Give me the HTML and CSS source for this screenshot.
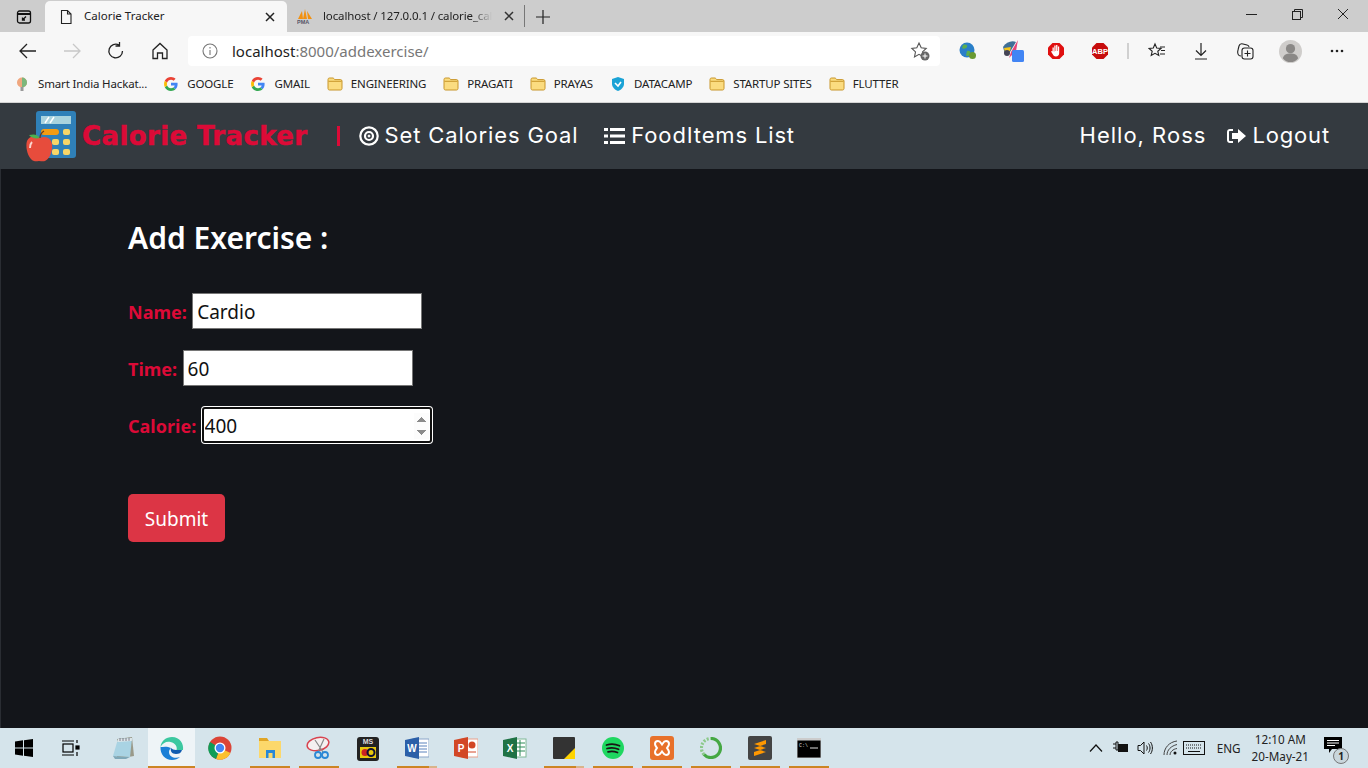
FILE: index.html
```html
<!DOCTYPE html>
<html lang="en">
<head>
    <meta charset="UTF-8">
    <meta name="viewport" content="width=device-width, initial-scale=1.0">
    <title>Calorie Tracker</title>
    <link rel="stylesheet" href="styles.css">
</head>
<body>

    <svg class="defs" width="0" height="0">
        <symbol id="folder" viewBox="0 0 16 16">
            <path d="M1 3.500C1 2.700 1.600 2 2.400 2h3.800l1.600 1.600h5.800c.8 0 1.400.6 1.400 1.400v7.500c0 .8-.6 1.500-1.400 1.500H2.400C1.600 14 1 13.300 1 12.500z" fill="#fbdc80" stroke="#c8962a"/>
            <path d="M1.500 5.300h13" stroke="#c8962a"/>
        </symbol>
        <symbol id="google" viewBox="0 0 16 16">
            <path d="M14.600 8.200c0-.5 0-1-.1-1.400H8v2.700h3.700c-.2.900-.7 1.600-1.400 2.100l2.200 1.700c1.300-1.200 2.100-3 2.100-5.100z" fill="#4285f4"/>
            <path d="M8 15c1.900 0 3.400-.6 4.500-1.700l-2.200-1.700c-.6.400-1.400.7-2.300.7-1.800 0-3.300-1.200-3.900-2.800L1.800 11.200C2.900 13.500 5.300 15 8 15z" fill="#34a853"/>
            <path d="M4.100 9.500c-.3-1-.3-2 0-3L1.800 4.800c-1 1.900-1 4.500 0 6.400z" fill="#fbbc05"/>
            <path d="M8 3.800c1 0 1.900.3 2.600 1l2-2C11.400 1.700 9.800 1 8 1 5.300 1 2.900 2.500 1.800 4.800l2.300 1.700C4.700 5 6.200 3.800 8 3.800z" fill="#ea4335"/>
        </symbol>
    </svg>

    <div class="window">

        <div class="tabstrip">
            <div class="tab-menu">
                <svg width="16" height="16" viewBox="0 0 16 16" fill="none" stroke="#111" stroke-width="1.300"><rect x="1.500" y="2" width="13" height="12" rx="2"/><path d="M1.500 5h13" stroke-width="2"/><path d="M10 7.500 6.500 11M6.500 8.500V11H9"/></svg>
            </div>
            <div class="tab tab-active">
                <svg width="16" height="16" viewBox="0 0 16 16" fill="none" stroke="#222" stroke-width="1.100"><path d="M3.500 1.500h6l3.500 3.500v9.500h-9.500zM9.500 1.500V5H13"/></svg>
                <span class="tab-title">Calorie Tracker</span>
                <svg class="tab-x" width="10" height="10" viewBox="0 0 10 10" stroke="#222" stroke-width="1.500"><path d="M1 1l8 8M9 1l-8 8"/></svg>
            </div>
            <div class="tab">
                <svg class="tab-icon" width="16" height="16" viewBox="0 0 16 16"><path d="M1 11 5 3l1 8zM6 11 8 1l2 10zM11 11l-1-8 5 8z" fill="#f29111"/><text x="0" y="16" font-size="5.500" font-weight="700" font-family="Liberation Sans" fill="#556">PMA</text></svg>
                <span class="tab-title tab-fade">localhost / 127.0.0.1 / calorie_cal</span>
                <svg class="tab-x" width="10" height="10" viewBox="0 0 10 10" stroke="#333" stroke-width="1.500"><path d="M1 1l8 8M9 1l-8 8"/></svg>
            </div>
            <div class="tab-new">
                <svg width="14" height="14" viewBox="0 0 14 14" stroke="#222" stroke-width="1.200"><path d="M7 0v14M0 7h14"/></svg>
            </div>
            <div class="win-controls">
                <div class="win-btn"><svg width="11" height="11" viewBox="0 0 11 11" stroke="#222"><path d="M0 5.500h11"/></svg></div>
                <div class="win-btn"><svg width="11" height="11" viewBox="0 0 11 11" fill="none" stroke="#222"><rect x=".5" y="2.500" width="8" height="8"/><path d="M2.500 2.500v-2h8v8h-2"/></svg></div>
                <div class="win-btn"><svg width="12" height="12" viewBox="0 0 12 12" stroke="#222"><path d="M1 1l10 10M11 1 1 11"/></svg></div>
            </div>
        </div>

        <div class="toolbar">
            <div class="tool"><svg width="18" height="16" viewBox="0 0 18 16" fill="none" stroke="#222" stroke-width="1.300"><path d="M17 8H1M8 1 1 8l7 7"/></svg></div>
            <div class="tool"><svg width="18" height="16" viewBox="0 0 18 16" fill="none" stroke="#c8c8c8" stroke-width="1.300"><path d="M1 8h16M10 1l7 7-7 7"/></svg></div>
            <div class="tool"><svg width="18" height="18" viewBox="0 0 18 18" fill="none" stroke="#222" stroke-width="1.300"><path d="M15.500 9A6.800 6.800 0 1 1 12 3.100M12.500 0v4h-4"/></svg></div>
            <div class="tool"><svg width="18" height="18" viewBox="0 0 18 18" fill="none" stroke="#222" stroke-width="1.300"><path d="M2 8 9 1.500 16 8v8.500h-4.500V11h-5v5.500H2z"/></svg></div>
            <div class="address">
                <svg width="16" height="16" viewBox="0 0 16 16" fill="none" stroke="#777" stroke-width="1.100"><circle cx="8" cy="8" r="7"/><path d="M8 7v5M8 4v1.500"/></svg>
                <span class="url">localhost<span class="url-dim">:8000/addexercise/</span></span>
                <svg class="addr-star" width="20" height="20" viewBox="0 0 20 20"><path d="M9 2l2.200 4.800 5 .6-3.700 3.500 1 5-4.500-2.600-4.500 2.600 1-5L1.800 7.400l5-.6z" fill="none" stroke="#555" stroke-width="1.100"/><circle cx="15" cy="15" r="4.500" fill="#666"/><path d="M15 12.500v5M12.500 15h5" stroke="#fff"/></svg>
            </div>
            <div class="tool tool-first"><svg width="18" height="18" viewBox="0 0 18 18"><circle cx="8" cy="8" r="7.500" fill="#2a7fc9"/><path d="M4 3c3-1 5 0 4 2S4 7 3 6zM8 9c3-1 4 1 3 3s-3 3-4 1z" fill="#5cae4f"/><circle cx="13.500" cy="13.500" r="3.500" fill="#6a9a32"/></svg></div>
            <div class="tool tool-shift">
                <svg width="24" height="24" viewBox="0 0 24 24"><path d="M1 8c3-5 9-7 13-5L8 13 3 15z" fill="#3f6f97"/><path d="M2 9l7-1-1 4-5 1z" fill="#f5c518"/><circle cx="5" cy="14" r="3" fill="#445"/><path d="M16 1 9 13l-2 6 7-7z" fill="#e8457a"/><rect x="10" y="11" width="12" height="12" rx="1.500" fill="#4285f4"/></svg>
            </div>
            <div class="tool"><svg width="18" height="18" viewBox="0 0 18 18"><path d="M5.500 1h7L17 5.500v7L12.500 17h-7L1 12.500v-7z" fill="#e01010"/><path d="M5.500 5.500h1.300v4h.5V3.500h1.300v5.500h.5V3h1.300v6h.5V4.500h1.300V11c0 2-1.200 3.500-3.300 3.500-1.600 0-2.400-.7-3-2L4 9.500l1-.6 1 1.300h-.5z" fill="#fff"/></svg></div>
            <div class="tool"><svg width="18" height="18" viewBox="0 0 18 18"><path d="M5.500 1h7L17 5.500v7L12.500 17h-7L1 12.500v-7z" fill="#c70d0d"/><text x="9" y="11.700" text-anchor="middle" font-size="7.500" font-weight="700" font-family="Liberation Sans" fill="#fff">ABP</text></svg></div>
            <div class="tool-sep"></div>
            <div class="tool"><svg width="18" height="18" viewBox="0 0 18 18" fill="none" stroke="#222" stroke-width="1.100"><path d="M7 2l1.700 4 4.300.4-3.200 2.900 1 4.200L7 11.300 3.200 13.500l1-4.200L1 6.400 5.300 6zM12 5h5M13 8.500h4M12 12h5"/></svg></div>
            <div class="tool"><svg width="18" height="18" viewBox="0 0 18 18" fill="none" stroke="#222" stroke-width="1.200"><path d="M9 1v12M4 8.500 9 13.500l5-5M3 17h12"/></svg></div>
            <div class="tool"><svg width="18" height="18" viewBox="0 0 18 18" fill="none" stroke="#222" stroke-width="1.100"><path d="M5 14C2 14 1 11 2 8l1-4c.5-2 2-2.500 4-2l4 1c1 .3 2 1 2 2"/><rect x="6" y="6" width="11" height="11" rx="2.500" fill="#f7f7f7"/><path d="M11.500 8.500v6M8.500 11.500h6"/></svg></div>
            <div class="tool tool-shift">
                <svg width="23" height="23" viewBox="0 0 24 24"><circle cx="12" cy="12" r="12" fill="#cfcdcb"/><circle cx="12" cy="9" r="4.800" fill="#8a8886"/><path d="M4 19c1-4 4-5 8-5s7 1 8 5c-2 3-5 4-8 4s-6-1-8-4z" fill="#8a8886"/></svg>
            </div>
            <div class="tool tool-last"><svg width="14" height="4" viewBox="0 0 14 4" fill="#222"><circle cx="2" cy="2" r="1.300"/><circle cx="7" cy="2" r="1.300"/><circle cx="12" cy="2" r="1.300"/></svg></div>
        </div>

        <div class="bookmarks">
            <div class="bookmark bookmark-first">
                <svg width="16" height="16" viewBox="0 0 16 16"><circle cx="8" cy="6.500" r="5" fill="#f0a77f"/><path d="M8 1.500a5 5 0 0 1 0 10z" fill="#7cb77c"/><rect x="6.500" y="11" width="3" height="4" fill="#999"/></svg>
                <span>Smart India Hackat...</span>
            </div>
            <div class="bookmark"><svg width="16" height="16"><use href="#google"/></svg><span>GOOGLE</span></div>
            <div class="bookmark"><svg width="16" height="16"><use href="#google"/></svg><span>GMAIL</span></div>
            <div class="bookmark"><svg width="16" height="16"><use href="#folder"/></svg><span>ENGINEERING</span></div>
            <div class="bookmark"><svg width="16" height="16"><use href="#folder"/></svg><span>PRAGATI</span></div>
            <div class="bookmark"><svg width="16" height="16"><use href="#folder"/></svg><span>PRAYAS</span></div>
            <div class="bookmark">
                <svg width="16" height="16" viewBox="0 0 16 16"><path d="M8 1l6 2v5c0 3-3 6-6 7-3-1-6-4-6-7V3z" fill="#1ba3d6"/><path d="M5 7l3 3 3-4" stroke="#fff" stroke-width="1.600" fill="none"/></svg>
                <span>DATACAMP</span>
            </div>
            <div class="bookmark"><svg width="16" height="16"><use href="#folder"/></svg><span>STARTUP SITES</span></div>
            <div class="bookmark"><svg width="16" height="16"><use href="#folder"/></svg><span>FLUTTER</span></div>
        </div>

        <nav class="navbar">
            <svg class="brand-logo" width="52" height="52" viewBox="0 0 52 52">
                <rect x="10" y="0" width="40" height="47" rx="3" fill="#2f80b8"/>
                <rect x="15" y="5" width="30" height="8" fill="#a9d3de"/>
                <path d="M19 12l4-6M24 12l4-6" stroke="#fff" stroke-width="1.500"/>
                <rect x="15" y="18" width="18" height="6" rx="3" fill="#f39c12"/>
                <rect x="37" y="18" width="7" height="6" rx="2" fill="#f7d568"/>
                <rect x="26" y="28" width="7" height="6" rx="2" fill="#f7d568"/>
                <rect x="37" y="28" width="7" height="6" rx="2" fill="#f7d568"/>
                <rect x="26" y="38" width="7" height="6" rx="2" fill="#f7d568"/>
                <rect x="37" y="38" width="7" height="6" rx="2" fill="#f7d568"/>
                <path d="M14 27C9 24 3 25 1 30c-2 6 1 18 7 20 2 .7 3 0 5 0s4 .7 6 0c6-3 9-14 6-20-2-4-7-5-11-3z" fill="#e74c3c"/>
                <path d="M14 27c-3-4-6-4-11-3 2 3 7 4 11 3z" fill="#4caf50"/>
                <path d="M14 27c0-3 1-5 4-7" stroke="#6b3a1e" stroke-width="1.300" fill="none"/>
                <path d="M6 31c-2 2-2 4-2 6" stroke="#fbd5cf" stroke-width="2" fill="none"/>
            </svg>
            <a class="brand">Calorie Tracker</a>
            <span class="nav-sep"></span>
            <a class="nav-link">
                <svg width="20" height="20" viewBox="0 0 20 20" fill="none" stroke="#fff"><circle cx="10" cy="10" r="8.700" stroke-width="2.200"/><circle cx="10" cy="10" r="4" stroke-width="2.200"/><circle cx="10" cy="10" r="1" fill="#fff"/></svg>
                Set Calories Goal
            </a>
            <a class="nav-link">
                <svg width="21" height="20" viewBox="0 0 21 20" fill="#fff"><rect x="0" y="2" width="4" height="3"/><rect x="0" y="8.500" width="4" height="3"/><rect x="0" y="15" width="4" height="3"/><rect x="6" y="2" width="15" height="3"/><rect x="6" y="8.500" width="15" height="3"/><rect x="6" y="15" width="15" height="3"/></svg>
                FoodItems List
            </a>
            <span class="nav-user">Hello, Ross</span>
            <a class="nav-link">
                <svg width="20" height="18" viewBox="0 0 20 18" fill="#fff"><path d="M7 2H4C2.300 2 1 3.300 1 5v8c0 1.700 1.300 3 3 3h3v-2H4c-.6 0-1-.4-1-1V5c0-.6.4-1 1-1h3z"/><path d="M12 2l8 7-8 7v-4H6V6h6z"/></svg>
                Logout
            </a>
        </nav>

        <main class="content">
            <h2 class="page-title">Add Exercise :</h2>
            <form class="form">
                <div class="form-row">
                    <label for="name">Name:</label>
                    <input class="field" id="name" type="text" value="Cardio">
                </div>
                <div class="form-row">
                    <label for="time">Time:</label>
                    <input class="field" id="time" type="text" value="60">
                </div>
                <div class="form-row">
                    <label for="calorie">Calorie:</label>
                    <input class="field field-focus" id="calorie" type="number" value="400">
                </div>
                <button class="submit" type="button">Submit</button>
            </form>
        </main>

        <div class="taskbar">
            <div class="task"><svg width="18" height="18" viewBox="0 0 18 18" fill="#000"><path d="M0 2.500 8 1.300V8.500H0zM9 1.200 18 0v8.500H9zM0 9.500h8v7.200L0 15.500zM9 9.500h9V18L9 16.800z"/></svg></div>
            <div class="task"><svg width="18" height="16" viewBox="0 0 18 16" fill="none" stroke="#000" stroke-width="1.200"><rect x="1" y="4" width="10" height="8"/><path d="M0 1h12M0 15h12M15 0v3M15 12v4"/><rect x="14" y="6" width="3" height="3" fill="#000"/></svg></div>
            <div class="task task-gap"><svg width="24" height="24" viewBox="0 0 24 24"><path d="M6 3 21 1l2 19-17 3z" fill="#9a9a8a"/><path d="M2 20 7 3l14-1-2 19z" fill="#a9d3e3"/><path d="M2 20l12 1 5 0-4 2-11 0z" fill="#7fa8b8"/><path d="M7 3l14-1-.3 3L6.200 6z" fill="#dfe7e9"/><path d="M9 2v3M12 2v3M15 2v3M18 1.800v3" stroke="#667" stroke-width=".8"/></svg></div>
            <div class="task task-active">
                <svg width="24" height="24" viewBox="0 0 24 24"><path d="M12 1C6 1 1 5 .5 11c2-4 6-6 10-5 5 1 7 5 6 8h6.500c1-6-3-13-11-13z" fill="#3cc8a0"/><path d="M.5 11C0 18 5 24 12 24c3 0 6-1 8-3-5 2-11 0-11-5 0-2 1-3 2-4-4-2-8-1-10.500-1z" fill="#1b7fd6"/><path d="M11 12c-1 3 1 6 5 6 3 0 5-1 6-4h-6c-2 0-4-1-5-2z" fill="#0f5cb0"/></svg>
            </div>
            <div class="task task-wide">
                <svg width="24" height="24" viewBox="0 0 24 24"><circle cx="12" cy="12" r="11.500" fill="#db4437"/><path d="M12 12 22.500 17A11.500 11.500 0 0 1 8 23z" fill="#fbc02d"/><path d="M12 12 8 23A11.500 11.500 0 0 1 2 6z" fill="#0f9d58"/><circle cx="12" cy="12" r="5.500" fill="#fff"/><circle cx="12" cy="12" r="4.200" fill="#4285f4"/></svg>
            </div>
            <div class="task task-open"><svg width="24" height="22" viewBox="0 0 24 22"><path d="M1 1h8l2 3H1z" fill="#e0a526"/><rect x="1" y="4" width="22" height="17" fill="#fcd86b"/><rect x="8" y="13" width="9" height="8" fill="#2a88d6"/><rect x="10.500" y="16" width="4" height="5" fill="#fcd86b"/></svg></div>
            <div class="task task-open"><svg width="26" height="24" viewBox="0 0 26 24" fill="none"><ellipse cx="12" cy="8" rx="11" ry="6.500" stroke="#d8434f" stroke-width="1.500" fill="#f4f0f0" transform="rotate(-12 12 8)"/><path d="M9 4l8 12M18 3l-6 13" stroke="#888" stroke-width="1.200"/><circle cx="12" cy="19" r="3" stroke="#2a88d6" stroke-width="1.800"/><circle cx="19" cy="19" r="3" stroke="#2a88d6" stroke-width="1.800"/></svg></div>
            <div class="task"><svg width="22" height="26" viewBox="0 0 22 26"><rect x="0" y="2" width="22" height="24" rx="3" fill="#222"/><text x="11" y="9" text-anchor="middle" font-size="7" font-weight="700" font-family="Liberation Sans" fill="#ddd">MS</text><rect x="3" y="12" width="16" height="11" fill="#e8c90c"/><circle cx="8" cy="17.500" r="3.500" fill="#c22"/><circle cx="14" cy="17.500" r="3.500" fill="none" stroke="#113" stroke-width="2"/></svg></div>
            <div class="task task-open task-multi"><svg width="24" height="22" viewBox="0 0 24 22"><rect x="8" y="2" width="16" height="18" fill="#fff" stroke="#8ba6c9"/><path d="M14 6h8M14 9h8M14 12h8M14 15h8" stroke="#5a83bd"/><path d="M0 3 14 0v22L0 19z" fill="#2b5fa8"/><text x="7" y="15" text-anchor="middle" font-size="10" font-weight="700" font-family="Liberation Sans" fill="#fff">W</text></svg></div>
            <div class="task"><svg width="24" height="22" viewBox="0 0 24 22"><rect x="8" y="2" width="16" height="18" fill="#fff" stroke="#e7a08c"/><circle cx="18" cy="8" r="3.500" fill="#d24726"/><path d="M14 15h8" stroke="#d24726"/><path d="M0 3 14 0v22L0 19z" fill="#d24726"/><text x="7" y="15" text-anchor="middle" font-size="10" font-weight="700" font-family="Liberation Sans" fill="#fff">P</text></svg></div>
            <div class="task"><svg width="24" height="22" viewBox="0 0 24 22"><rect x="8" y="2" width="15" height="18" fill="#fff" stroke="#7fb796"/><path d="M13 6h9M13 10h9M13 14h9M17 3v16" stroke="#2c8a57"/><path d="M0 3 14 0v22L0 19z" fill="#1f7245"/><text x="7" y="15" text-anchor="middle" font-size="10" font-weight="700" font-family="Liberation Sans" fill="#fff">X</text></svg></div>
            <div class="task task-open task-multi"><svg width="22" height="22" viewBox="0 0 22 22"><rect width="22" height="22" rx="1" fill="#333"/><path d="M11 22 22 11v11z" fill="#ffd400"/></svg></div>
            <div class="task task-open"><svg width="22" height="22" viewBox="0 0 22 22" fill="none"><circle cx="11" cy="11" r="11" fill="#1ed760"/><path d="M4.500 8c4-1.200 9-1 13 .8M5 11.500c3.500-1 8-.8 11.500.8M6 14.800c3-.8 6.500-.6 9.500.7" stroke="#191414" stroke-width="1.800" stroke-linecap="round"/></svg></div>
            <div class="task task-open"><svg width="24" height="24" viewBox="0 0 24 24"><rect width="24" height="24" rx="3" fill="#e8712a"/><path d="M8 5c-2 0-3 1.500-3 3 0 1.500 1 2.500 2 4-1 1.500-2 2.500-2 4 0 1.500 1 3 3 3 2 0 3-2 4-3.500 1 1.500 2 3.500 4 3.500 2 0 3-1.500 3-3 0-1.500-1-2.500-2-4 1-1.500 2-2.500 2-4 0-1.500-1-3-3-3-2 0-3 2-4 3.500C11 7 10 5 8 5z" fill="none" stroke="#fff" stroke-width="2"/></svg></div>
            <div class="task task-open"><svg width="22" height="22" viewBox="0 0 22 22" fill="none"><path d="M11 1.500a9.500 9.500 0 1 1-7 16" stroke="#45a843" stroke-width="3.200"/><path d="M4 17.500a9.500 9.500 0 0 1 7-16" stroke="#8cc98a" stroke-width="3.200" stroke-dasharray="2 1.500"/></svg></div>
            <div class="task task-open"><svg width="24" height="24" viewBox="0 0 24 24"><rect width="24" height="24" rx="2" fill="#444"/><path d="M18 4 6 8v4l12-4zM6 8l12 4v4L6 12zM18 12 6 16v4l12-4z" fill="#ff9800"/></svg></div>
            <div class="task task-open"><svg width="24" height="20" viewBox="0 0 24 20"><rect width="24" height="20" fill="#000" stroke="#bbb"/><rect width="24" height="2.500" fill="#ccc"/><text x="2" y="9" font-size="5" font-family="Liberation Mono" fill="#ddd">C:\</text><path d="M13 10h8" stroke="#ddd"/></svg></div>

            <div class="tray">
                <svg width="14" height="8" viewBox="0 0 14 8" fill="none" stroke="#111" stroke-width="1.200"><path d="M1 7.500 7 1l6 6.500"/></svg>
                <svg class="tray-battery" width="16" height="14" viewBox="0 0 16 14"><path d="M0 3h3M0 7h3M3 1v8h2V1z" stroke="#111" fill="none"/><rect x="5" y="3" width="10" height="8" fill="#111"/></svg>
                <svg width="16" height="16" viewBox="0 0 16 16" fill="none" stroke="#111"><path d="M1 5.500h2.500L7 2v12L3.500 10.500H1zM9.500 5.500c1 1.500 1 3.500 0 5M11.500 3.500c2 2.500 2 6.500 0 9M13.500 2c2.500 3.500 2.500 8.500 0 12"/></svg>
                <svg class="tray-wifi" width="16" height="16" viewBox="0 0 16 16" fill="none" stroke="#444"><path d="M1 15C1 8 6 2 14 1M4 15c0-5 4-9 10-10.500M7 15c0-3 3-6 7-6.500"/><circle cx="12" cy="13" r="1.500" fill="#111" stroke="none"/></svg>
                <svg class="tray-keyboard" width="22" height="14" viewBox="0 0 22 14" fill="none" stroke="#111"><rect x=".5" y=".5" width="21" height="13"/><path d="M3 4h16M3 7h16" stroke-dasharray="1 1"/><path d="M5 10.500h12"/></svg>
                <span class="tray-lang">ENG</span>
                <div class="clock"><span>12:10 AM</span><span>20-May-21</span></div>
                <div class="notify">
                    <svg width="18" height="16" viewBox="0 0 18 16"><path d="M0 0h18v12H8l-3 4v-4H0z" fill="#000"/><path d="M3 3.500h12M3 6h12M3 8.500h8" stroke="#fff"/></svg>
                    <span class="notify-badge">1</span>
                </div>
            </div>
        </div>
    </div>

</body>
</html>
```

FILE: styles.css
```css
* {
    margin: 0;
    padding: 0;
    box-sizing: border-box;
}

body {
    font-family: "Noto Sans", "Open Sans", sans-serif;
    width: 1368px;
    height: 768px;
    overflow: hidden;
    background-color: #13151a;
}

.defs {
    display: block;
    height: 0;
}

.window {
    display: flex;
    flex-direction: column;
    height: 768px;
}

/* tab strip */
.tabstrip {
    display: flex;
    align-items: flex-end;
    height: 32px;
    padding-top: 1px;
    background-color: #cdcdcd;
    flex-shrink: 0;
}

.tab-menu {
    display: flex;
    align-items: center;
    justify-content: center;
    width: 45px;
    height: 31px;
    padding-left: 2px;
}

.tab {
    display: flex;
    align-items: center;
    width: 242px;
    height: 31px;
    padding: 0 12px 0 13px;
    gap: 10px;
    font-size: 11.5px;
    color: #222;
}

.tab + .tab {
    width: 238px;
    padding: 0 10px 0 10px;
    gap: 10px;
    border-right: 1px solid #777;
    height: 22px;
    margin-bottom: 5px;
}

.tab-active {
    background-color: #f7f7f7;
    border-radius: 5px 5px 0 0;
}

.tab-icon {
    flex-shrink: 0;
}

.tab-title {
    flex: 1;
    padding-bottom: 2px;
    white-space: nowrap;
}

.tab-fade {
    flex: none;
    letter-spacing: -0.13px;
    -webkit-mask-image: linear-gradient(to right, #000 88%, transparent 100%);
    mask-image: linear-gradient(to right, #000 88%, transparent 100%);
}

.tab-x {
    margin-left: auto;
    flex-shrink: 0;
}

.tab-new {
    display: flex;
    align-items: center;
    justify-content: center;
    width: 36px;
    height: 31px;
}

.win-controls {
    display: flex;
    margin-left: auto;
    padding-right: 2px;
}

.win-btn {
    display: flex;
    align-items: center;
    justify-content: center;
    width: 46px;
    height: 31px;
    padding-bottom: 5px;
}

/* toolbar */
.toolbar {
    display: flex;
    align-items: center;
    height: 38px;
    padding: 0 6px;
    background-color: #f7f7f7;
    flex-shrink: 0;
}

.tool {
    display: flex;
    align-items: center;
    justify-content: center;
    width: 44px;
    height: 30px;
}

.tool-first {
    margin-left: 6px;
}

.tool-shift {
    padding-left: 3px;
}

.tool-last {
    margin-left: 4px;
}

.tool-sep {
    width: 2px;
    height: 16px;
    margin: 0 6px 0 5px;
    background-color: #d0d0d0;
}

.address {
    display: flex;
    align-items: center;
    width: 752px;
    height: 30px;
    margin-left: 6px;
    padding: 0 10px 0 14px;
    background-color: #fff;
    border-radius: 4px;
    gap: 14px;
}

.url {
    font-size: 15px;
    color: #222;
}

.url-dim {
    color: #777;
}

.addr-star {
    margin-left: auto;
}

/* bookmarks */
.bookmarks {
    display: flex;
    align-items: center;
    height: 33px;
    padding: 0 0 5px 14px;
    gap: 17px;
    font-size: 11.5px;
    letter-spacing: -0.15px;
    color: #222;
    background-color: #f7f7f7;
    border-bottom: 1px solid #d4d4d4;
    flex-shrink: 0;
}

.bookmark {
    display: flex;
    align-items: center;
    gap: 8px;
    white-space: nowrap;
}

.bookmark-first {
    margin-right: -1px;
}

/* site navbar */
.navbar {
    display: flex;
    align-items: center;
    height: 66px;
    padding: 0 38px 0 26px;
    font-family: Inter, "Liberation Sans", sans-serif;
    font-size: 22px;
    color: #fff;
    background-color: #343a40;
    flex-shrink: 0;
}

.brand-logo {
    margin-top: 2px;
    flex-shrink: 0;
}

.brand {
    margin-left: 4px;
    font-family: "DejaVu Sans", sans-serif;
    font-weight: 700;
    font-size: 26px;
    letter-spacing: 0.4px;
    color: #dc0a37;
    -webkit-text-stroke: 0.5px #dc0a37;
    white-space: nowrap;
}

.nav-sep {
    width: 3px;
    height: 20px;
    margin: 0 19px 0 29px;
    background-color: #dc0a37;
}

.nav-link {
    display: flex;
    align-items: center;
    gap: 6px;
    margin-right: 26px;
    padding-bottom: 2px;
    white-space: nowrap;
    letter-spacing: 0.85px;
}

.nav-link:last-child {
    margin-right: 0;
}

.nav-link svg {
    margin-top: 2px;
}

.nav-user {
    margin-left: auto;
    margin-right: 20px;
    padding-bottom: 2px;
    white-space: nowrap;
    letter-spacing: 1px;
}

/* form */
.content {
    flex: 1;
    padding: 47px 128px 0 127px;
    background-color: #13151a;
    border-left: 1px solid #2a2d33;
}

.page-title {
    font-size: 30px;
    font-weight: 600;
    line-height: 44px;
    color: #fff;
    margin-bottom: 33px;
}

.form-row {
    display: flex;
    align-items: center;
    gap: 5.4px;
    height: 36px;
    margin-bottom: 21px;
}

.form-row label {
    padding-top: 2px;
    font-size: 18px;
    font-weight: 700;
    color: #dc0a37;
}

.field {
    width: 230px;
    height: 36px;
    padding: 1px 4px 0;
    font-family: "Noto Sans", sans-serif;
    font-size: 19px;
    color: #111;
    background-color: #fff;
    border: 1px solid #767676;
    outline: none;
}

.field-focus {
    padding: 1px 1px 0;
    border: 2px solid #101010;
    border-radius: 3px;
    box-shadow: 0 0 0 1px #fff;
}

.field-focus::-webkit-inner-spin-button {
    opacity: 1;
}

.submit {
    display: block;
    width: 97px;
    height: 48px;
    margin-top: 51px;
    padding-top: 2px;
    font-family: "Noto Sans", sans-serif;
    font-size: 19px;
    color: #fff;
    background-color: #dc3545;
    border: none;
    border-radius: 5px;
}

/* windows taskbar */
.taskbar {
    display: flex;
    height: 40px;
    background-color: #d5e4eb;
    flex-shrink: 0;
}

.task {
    position: relative;
    display: flex;
    align-items: center;
    justify-content: center;
    width: 49px;
    height: 40px;
    flex-shrink: 0;
}

.task:first-child {
    width: 48px;
}

.task:nth-child(2) {
    width: 46px;
}

.task-gap {
    margin-left: 4px;
    width: 50px;
}

.task-active {
    width: 47px;
    background-color: #eef4f7;
}

.task-wide {
    width: 50px;
}

.task-active::after,
.task-open::after {
    content: "";
    position: absolute;
    left: 5px;
    right: 4px;
    bottom: 0;
    height: 2px;
    background-color: #cc8524;
}

.task-active::after {
    left: 0;
    right: 0;
}

.task-multi::after {
    background: linear-gradient(to right, #cc8524 80%, #d9b48a 80%);
}

.tray {
    display: flex;
    align-items: center;
    gap: 8px;
    margin-left: auto;
    padding-right: 19px;
    font-size: 11.7px;
    color: #222;
}

.tray-battery {
    margin-left: 2px;
}

.tray-wifi {
    margin-left: 2px;
}

.tray-keyboard {
    margin-left: -4px;
}

.tray-lang {
    margin-left: 4px;
}

.clock {
    display: flex;
    flex-direction: column;
    align-items: center;
    line-height: 17px;
    margin-left: 3px;
}

.notify {
    position: relative;
    margin-left: 7px;
    width: 25px;
    height: 22px;
}

.notify-badge {
    position: absolute;
    right: 0;
    bottom: -5px;
    width: 16px;
    height: 16px;
    border: 1px solid #777;
    border-radius: 50%;
    font-size: 10px;
    font-weight: 700;
    line-height: 14px;
    text-align: center;
    background-color: #c9d6dc;
}
```
